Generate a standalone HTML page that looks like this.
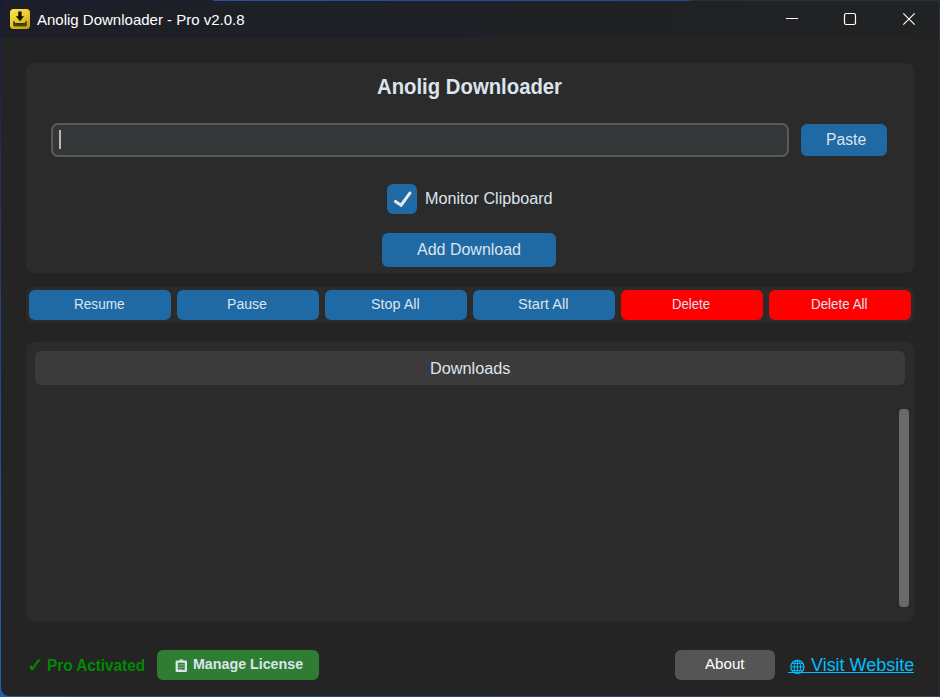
<!DOCTYPE html>
<html><head><meta charset="utf-8">
<style>
*{box-sizing:border-box;margin:0;padding:0}
html,body{width:940px;height:697px;overflow:hidden}
body{background:linear-gradient(90deg,rgba(32,36,50,0) 0%,rgba(32,36,50,0) 60%,rgba(32,36,50,1) 100%),linear-gradient(180deg,#121a3a 0,#27336e 30%,#2a4a9a 65%,#1a62b4 100%);font-family:"Liberation Sans",sans-serif;color:#dce4ee;position:relative}
.abs{position:absolute}
#win{left:1px;top:1px;width:938px;height:695px;border-radius:8px;background:#242424;overflow:hidden}
#tbar{left:0;top:0;width:938px;height:37px;background:linear-gradient(90deg,#1d1f28 0%,#1e2027 40%,#202124 60%,#212224 100%)}
#ttext{left:36px;top:10px;font-size:15px;color:#fff;white-space:nowrap;line-height:17px}
.panel{background:#2b2b2b;border-radius:8px}
.btn{background:#1f6aa5;border-radius:6px}
.red{background:#ff0000}
.t{position:absolute;white-space:nowrap;line-height:1;transform-origin:0 0;color:#dce4ee}
</style></head><body>
<div class="abs" style="left:0;top:0;width:940px;height:1px;background:linear-gradient(90deg,#151d3a 0,#151d3a 212px,#2f4aa6 214px,#2c449c 688px,#2b2f3c 692px,#2b2f3c 100%)"></div>
<div class="abs" style="left:0;top:0;width:1px;height:697px;background:linear-gradient(180deg,#121a3a 0,#27336e 30%,#2a4a9a 65%,#1a62b4 100%)"></div>
<div class="abs" style="left:0;top:696px;width:940px;height:1px;background:linear-gradient(90deg,#1a62b4 0,#2a4a78 8%,#2c4668 50%,#3a4656 100%)"></div>
<div class="abs" style="left:939px;top:0;width:1px;height:697px;background:#2a2f3e"></div>
<div id="win" class="abs">
  <div id="tbar" class="abs"></div>
  <svg class="abs" style="left:9px;top:8px" width="20" height="20" viewBox="0 0 20 20">
    <defs><linearGradient id="yg" x1="0" y1="0" x2="0.6" y2="1"><stop offset="0" stop-color="#f7e65a"/><stop offset="0.55" stop-color="#eccb2c"/><stop offset="1" stop-color="#c9a416"/></linearGradient>
    <linearGradient id="kg" x1="0" y1="0" x2="0" y2="1"><stop offset="0" stop-color="#2a2404"/><stop offset="1" stop-color="#5a4c08"/></linearGradient></defs>
    <rect x="0" y="0" width="20" height="20" rx="1" fill="#14120a"/>
    <rect x="0" y="0" width="20" height="20" rx="3.5" fill="url(#yg)"/>
    <path d="M8.2 2.4h3.4v4.9h2.5L10 12.2 5.8 7.3h2.4z" fill="#151204"/>
    <path d="M3.2 12.3h1.5v1.8h10.6v-1.8h1.5v4.2a1 1 0 0 1-1 1H4.2a1 1 0 0 1-1-1z" fill="url(#kg)"/>
  </svg>
  <svg class="abs" style="left:780px;top:8px" width="150" height="24" viewBox="781 9 150 24" fill="none" stroke="#fff" stroke-width="1.2">
    <path d="M786 18.5h12" stroke-width="1.1"/>
    <rect x="844.5" y="13.5" width="11" height="11" rx="1.8"/>
    <path d="M903.3 13.3l11.4 11.4M914.7 13.3l-11.4 11.4" stroke-width="1.15"/>
  </svg>
  <div id="ttext" class="abs">Anolig Downloader - Pro v2.0.8</div>
</div>
<!-- top panel -->
<div class="abs panel" style="left:26px;top:63px;width:888px;height:210px"></div>
<div class="abs" style="left:51px;top:123px;width:738px;height:34px;border:2px solid #565b5e;border-radius:7px;background:#343638"></div>
<div class="abs" style="left:59px;top:130px;width:2px;height:19px;background:#b8b8b8"></div>
<div class="abs btn" style="left:801px;top:124px;width:86px;height:32px"></div>
<div class="abs btn" style="left:387px;top:184px;width:30px;height:30px"></div>
<svg class="abs" style="left:387px;top:184px" width="30" height="30" viewBox="387 184 30 30"><path d="M395.5 201.5L401.1 205.2L409.9 193.1" fill="none" stroke="#e8e8e8" stroke-width="3.1" stroke-linecap="round" stroke-linejoin="miter"/></svg>
<div class="abs btn" style="left:382px;top:233px;width:174px;height:34px"></div>
<!-- button row -->
<div class="abs panel" style="left:26px;top:287px;width:888px;height:36px"></div>
<div class="abs btn" style="left:29px;top:290px;width:142px;height:30px"></div>
<div class="abs btn" style="left:177px;top:290px;width:142px;height:30px"></div>
<div class="abs btn" style="left:325px;top:290px;width:142px;height:30px"></div>
<div class="abs btn" style="left:473px;top:290px;width:142px;height:30px"></div>
<div class="abs btn red" style="left:621px;top:290px;width:142px;height:30px"></div>
<div class="abs btn red" style="left:769px;top:290px;width:142px;height:30px"></div>
<!-- downloads -->
<div class="abs panel" style="left:26px;top:342px;width:888px;height:280px"></div>
<div class="abs" style="left:35px;top:351px;width:870px;height:34px;border-radius:6px;background:#3b3b3b"></div>
<div class="abs" style="left:899px;top:408.5px;width:10px;height:198.5px;border-radius:4px;background:#6a6a6a"></div>
<!-- footer -->
<div class="abs btn" style="left:157px;top:650px;width:162px;height:30px;background:#2e7d32"></div>
<div class="abs btn" style="left:675px;top:650px;width:100px;height:30px;background:#555555"></div>
<svg class="abs" style="left:174px;top:658px" width="16" height="16" viewBox="174 658 16 16" fill="none" stroke="#dce4ee">
  <path d="M176.75 661.6h9.1v9.3h-9.1z" stroke-width="2.3" stroke-linejoin="round"/>
  <path d="M179.4 660.6q1.9-1.4 3.8 0" stroke-width="1.2"/>
  <path d="M178.4 664.9h5.8M178.4 667.3h5.8M178.4 669.4h3.4" stroke-width="0.9" stroke="#9cc4a4"/>
</svg>
<svg class="abs" style="left:788px;top:658px" width="20" height="18" viewBox="788 658 20 18" fill="none" stroke="#00bfff" stroke-width="1">
  <circle cx="797.4" cy="666.9" r="6.6" stroke-width="1.2"/>
  <ellipse cx="797.4" cy="666.9" rx="3.2" ry="6.6"/>
  <path d="M797.4 660.3v13.2M790.8 666.9h13.2M791.8 663.4h11.2M791.8 670.4h11.2"/>
</svg>
<!-- texts -->
<span class="t" id="t_head" style="left:377.1px;top:75.6px;font-size:22.4px;font-weight:bold;transform:scaleX(0.907)">Anolig Downloader</span>
<span class="t" id="t_paste" style="left:825.6px;top:132.08px;font-size:16px;transform:scaleX(0.98)">Paste</span>
<span class="t" id="t_mon" style="left:425.3px;top:190.5px;font-size:16px;transform:scaleX(1.0104)">Monitor Clipboard</span>
<span class="t" id="t_add" style="left:416.89px;top:242.34px;font-size:16px;transform:scaleX(0.9993)">Add Download</span>
<span class="t" id="t_b1" style="left:73.8px;top:297.25px;font-size:14px;transform:scaleX(0.9702)">Resume</span>
<span class="t" id="t_b2" style="left:227.25px;top:297.25px;font-size:14px;transform:scaleX(1.0053)">Pause</span>
<span class="t" id="t_b3" style="left:371.15px;top:297.25px;font-size:14px;transform:scaleX(1.0245)">Stop All</span>
<span class="t" id="t_b4" style="left:518.15px;top:297.25px;font-size:14px;transform:scaleX(1.0449)">Start All</span>
<span class="t" id="t_b5" style="left:671.71px;top:297.25px;font-size:14px;transform:scaleX(0.9375)">Delete</span>
<span class="t" id="t_b6" style="left:810.55px;top:297.25px;font-size:14px;transform:scaleX(0.956)">Delete All</span>
<span class="t" id="t_dl" style="left:429.5px;top:361.25px;font-size:16px;transform:scaleX(1.0153)">Downloads</span>
<span class="t" id="t_chk" style="left:27px;top:656px;font-size:19.5px;font-weight:normal;-webkit-text-stroke:0.35px #008a00;color:#008a00">✓</span>
<span class="t" id="t_pro" style="left:46.77px;top:657.75px;font-size:16px;font-weight:bold;color:#008a00;transform:scaleX(0.9556)">Pro Activated</span>
<span class="t" id="t_lic" style="left:193.34px;top:655.8px;font-size:15px;font-weight:bold;transform:scaleX(0.9502)">Manage License</span>
<span class="t" id="t_about" style="left:705.27px;top:655.68px;font-size:15px;color:#fff;transform:scaleX(1.0081)">About</span>
<span class="t" id="t_web" style="left:811.19px;top:655.5px;font-size:18px;color:#00bfff;transform:scaleX(0.9976)">Visit Website</span>
<div class="abs" style="left:788px;top:671.8px;width:126px;height:1.5px;background:#00bfff"></div>
</body></html>
